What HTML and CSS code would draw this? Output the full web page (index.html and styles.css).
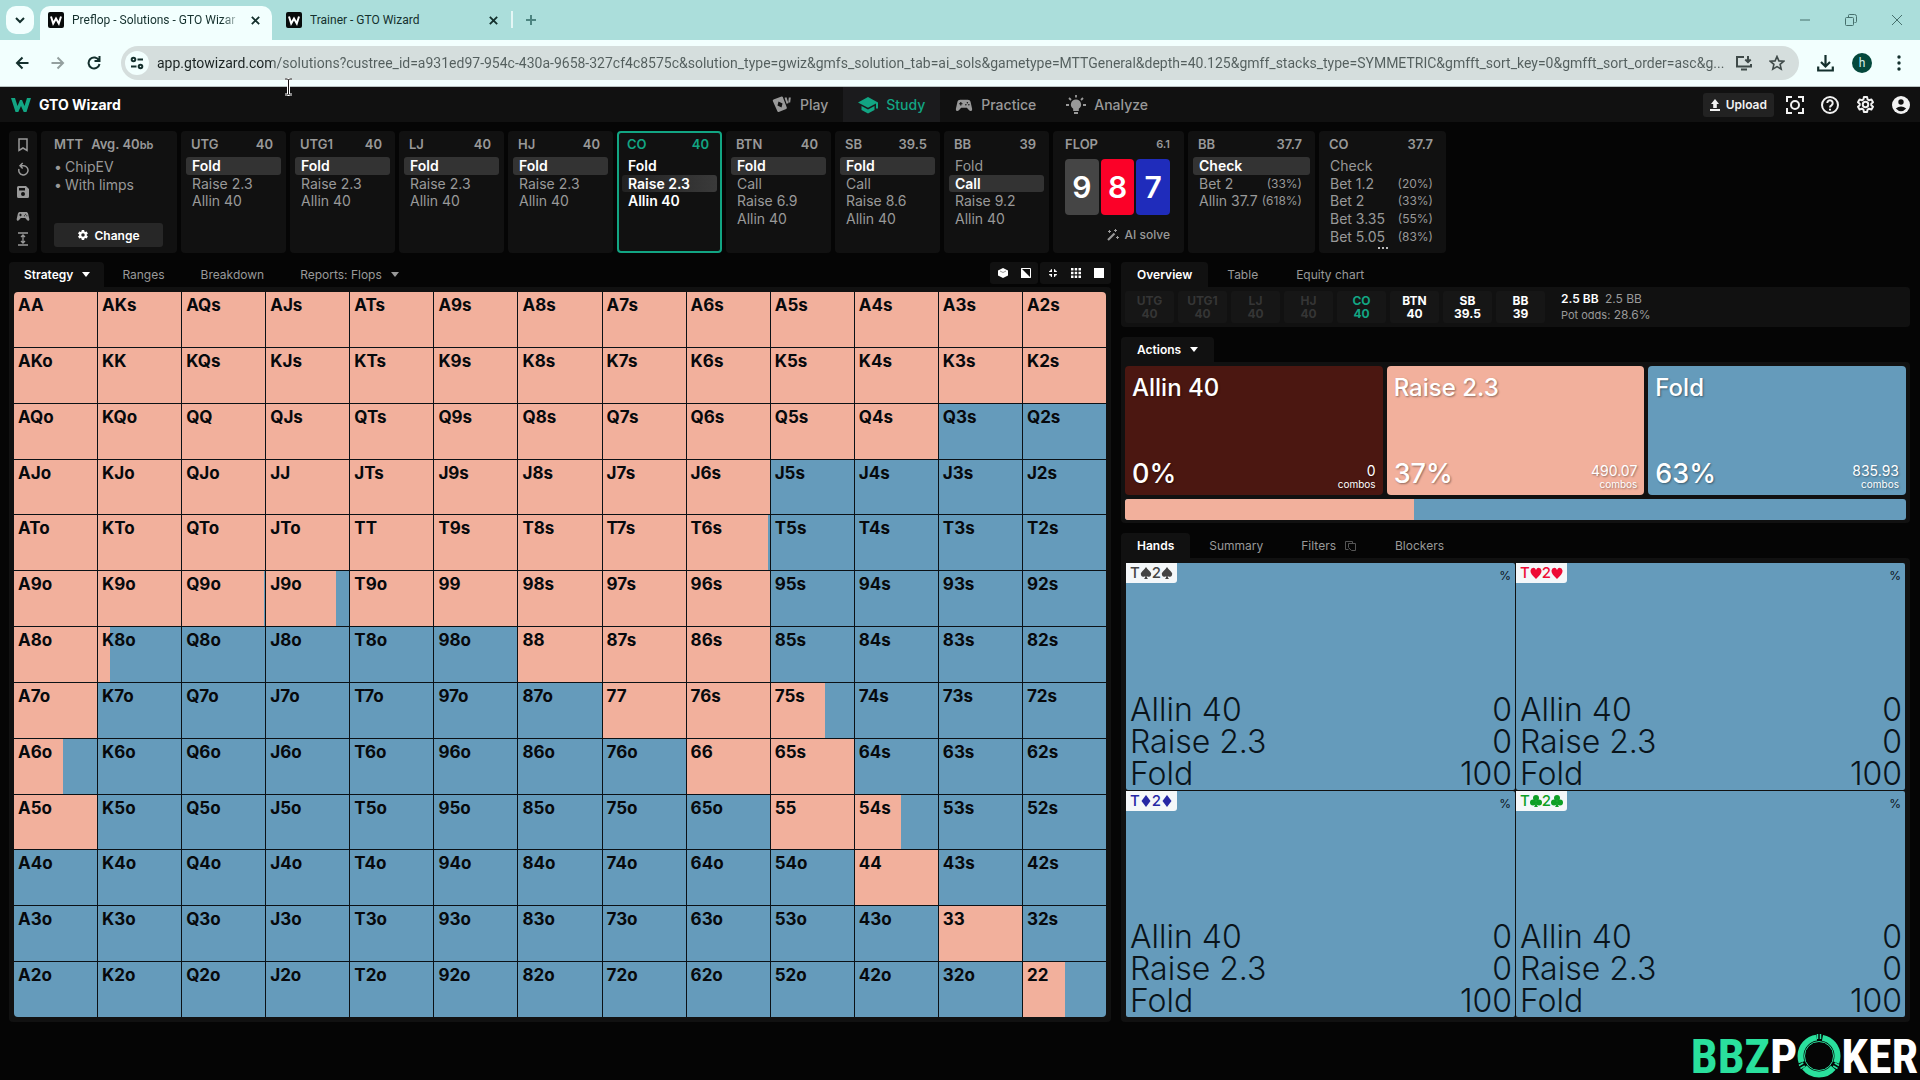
FILE: index.html
```html
<!DOCTYPE html>
<html lang="en">
<head>
<meta charset="utf-8">
<title>Preflop - Solutions - GTO Wizard</title>
<link rel="stylesheet" href="styles.css">
</head>
<body>
<svg class="defs" width="0" height="0" aria-hidden="true">
  <symbol id="gear" viewBox="0 0 24 24"><path d="M19.4 13c0-.3.1-.6.1-1s0-.7-.1-1l2.1-1.600c.2-.2.2-.4.1-.6l-2-3.500c-.1-.2-.4-.3-.6-.2l-2.500 1c-.5-.4-1.100-.7-1.700-1l-.4-2.600c0-.3-.2-.5-.5-.5h-4c-.3 0-.5.2-.5.4L9 5.100c-.6.2-1.200.6-1.700 1l-2.500-1c-.2-.1-.5 0-.6.200l-2 3.500c-.1.200-.1.500.1.600L4.500 11c0 .3-.1.700-.1 1s0 .7.100 1l-2.200 1.600c-.2.200-.2.400-.1.600l2 3.500c.1.200.4.300.6.200l2.500-1c.5.400 1.100.7 1.700 1l.4 2.600c0 .3.300.5.500.5h4c.3 0 .5-.2.500-.4l.4-2.700c.6-.2 1.200-.6 1.700-1l2.500 1c.2.100.5 0 .6-.2l2-3.500c.1-.2.100-.5-.1-.6zM12 15.500a3.500 3.500 0 1 1 0-7 3.500 3.500 0 0 1 0 7z"/></symbol>
  <symbol id="gear-line" viewBox="0 0 24 24"><path fill="none" stroke="currentColor" stroke-width="2.500" stroke-linejoin="round" d="M10 2.500h4l.6 3 2 1.200 2.900-1 2 3.500L19.300 11v2l2.200 1.900-2 3.400-2.900-1-2 1.200-.6 3h-4l-.6-3-2-1.200-2.900 1-2-3.400L4.700 13v-2L2.500 9.200l2-3.500 2.900 1 2-1.200z"/><circle cx="12" cy="12" r="3.500" fill="none" stroke="currentColor" stroke-width="2.500"/></symbol>
  <symbol id="pad" viewBox="0 0 24 24"><path fill-rule="evenodd" d="M7 5h10c2 0 3.300 1 3.800 3l2 9c.5 3-2.300 4-4 2l-3-3.500H8.200L5.200 19c-1.700 2-4.500 1-4-2l2-9C3.700 6 5 5 7 5zm0 3v1.500H5.500V11H7v1.500h1.500V11H10V9.500H8.500V8zm9.500 0a1 1 0 1 0 0 2 1 1 0 0 0 0-2zm-2 2.500a1 1 0 1 0 0 2 1 1 0 0 0 0-2zm4 0a1 1 0 1 0 0 2 1 1 0 0 0 0-2z"/></symbol>
  <symbol id="fav" viewBox="0 0 16 16"><rect width="16" height="16" rx="2" fill="#080b0b"/><path d="M3 4.500l2.200 7L8 6.500l2.800 5 2.200-7" fill="none" stroke="#fff" stroke-width="2"/></symbol>
  <symbol id="close" viewBox="0 0 12 12"><path d="M2 2l8 8M10 2l-8 8" fill="none" stroke="currentColor" stroke-width="2"/></symbol>
</svg>

<div class="browser">
  <div class="tabstrip">
    <button class="tab-search" aria-label="Search tabs"><svg width="10" height="8" viewBox="0 0 10 8"><path d="M1 2l4 4 4-4" fill="none" stroke="currentColor" stroke-width="2"/></svg></button>
    <div class="btab btab-on"><svg width="16" height="16"><use href="#fav"/></svg><span class="btab-title">Preflop - Solutions - GTO Wizar</span><button aria-label="Close tab"><svg width="11" height="11"><use href="#close"/></svg></button></div>
    <div class="btab"><svg width="16" height="16"><use href="#fav"/></svg><span class="btab-title">Trainer - GTO Wizard</span><button aria-label="Close tab"><svg width="11" height="11"><use href="#close"/></svg></button></div>
    <button class="new-tab" aria-label="New tab"><svg width="12" height="12" viewBox="0 0 12 12"><path d="M6 1v10M1 6h10" stroke="currentColor" stroke-width="2"/></svg></button>
    <div class="win">
      <button aria-label="Minimize"><svg width="12" height="12" viewBox="0 0 12 12"><path d="M1 6h10" stroke="currentColor"/></svg></button>
      <button aria-label="Restore"><svg width="12" height="12" viewBox="0 0 12 12"><path d="M3.500 3V1.500q0-1 1-1h5q2 0 2 2v5q0 1-1 1H9.500M.5 4.500q0-1 1-1h6q1 0 1 1v6q0 1-1 1h-6q-1 0-1-1z" fill="none" stroke="currentColor"/></svg></button>
      <button aria-label="Close"><svg width="12" height="12" viewBox="0 0 12 12"><path d="M1 1l10 10M11 1L1 11" stroke="currentColor"/></svg></button>
    </div>
  </div>
  <div class="toolbar">
    <button class="nav" aria-label="Back"><svg width="14" height="14" viewBox="0 0 14 14"><path d="M13.500 7H2M7.500 1.500L2 7l5.500 5.500" fill="none" stroke="currentColor" stroke-width="2"/></svg></button>
    <button class="nav dim" aria-label="Forward"><svg width="14" height="14" viewBox="0 0 14 14"><path d="M.5 7H12M6.500 1.500L12 7l-5.500 5.500" fill="none" stroke="currentColor" stroke-width="2"/></svg></button>
    <button class="nav" aria-label="Reload"><svg width="14" height="14" viewBox="0 0 14 14"><path d="M12 4.500A5.500 5.500 0 1 0 12.500 8M12.500 0v5h-5" fill="none" stroke="currentColor" stroke-width="2"/></svg></button>
    <div class="omnibox">
      <button class="site" aria-label="Site information"><svg width="14" height="14" viewBox="0 0 14 14" fill="none" stroke="currentColor" stroke-width="2"><circle cx="3.500" cy="3.500" r="1.800"/><path d="M7.500 3.500H13M1 10.500h5.500"/><circle cx="10.500" cy="10.500" r="1.800"/></svg></button>
      <input class="url" aria-label="Address" value="app.gtowizard.com/solutions?custree_id=a931ed97-954c-430a-9658-327cf4c8575c&amp;solution_type=gwiz&amp;gmfs_solution_tab=ai_sols&amp;gametype=MTTGeneral&amp;depth=40.125&amp;gmff_stacks_type=SYMMETRIC&amp;gmfft_sort_key=0&amp;gmfft_sort_order=asc&amp;g...">
      <button aria-label="Install app"><svg width="18" height="16" viewBox="0 0 18 16" fill="none" stroke="currentColor" stroke-width="2"><path d="M9 2H2v9.500h14V9M6 14.500h6M13 1v6M10.300 4.500L13 7.200l2.700-2.700"/></svg></button>
      <button aria-label="Bookmark"><svg width="16" height="16" viewBox="0 0 16 16"><path d="M8 1.500l1.900 4.400 4.800.4-3.600 3.100 1.100 4.700L8 11.600l-4.200 2.500 1.100-4.700L1.300 6.300l4.800-.4z" fill="none" stroke="currentColor" stroke-width="1.600"/></svg></button>
    </div>
    <button class="act" aria-label="Downloads"><svg width="17" height="17" viewBox="0 0 17 17"><path d="M8.500 0v11M4 7l4.500 4.500L13 7M1.200 11.500v4h14.600v-4" fill="none" stroke="currentColor" stroke-width="2.200"/></svg></button>
    <button class="avatar" aria-label="Profile">h</button>
    <button class="act" aria-label="Menu"><svg width="4" height="16" viewBox="0 0 4 16" fill="currentColor"><circle cx="2" cy="2" r="1.700"/><circle cx="2" cy="8" r="1.700"/><circle cx="2" cy="14" r="1.700"/></svg></button>
  </div>
</div>

<header class="top">
  <a class="brand" href="#"><svg width="20" height="16" viewBox="0 0 20 16"><path d="M0 1l4 0 2.500 8L9 3l2 0 2.500 6L16 1h4l-4.500 14h-2.800L10 9l-2.700 6H4.500z" fill="#12a583"/></svg>GTO Wizard</a>
  <nav class="mainnav">
    <a href="#"><svg width="20" height="20" viewBox="0 0 20 20" fill="currentColor"><path fill-rule="evenodd" d="M1.500 4.500l8-3q1-.3 1.300.6l4 10.500q.3 1-.6 1.300l-7.500 3q-1 .3-1.300-.6L.8 6Q.5 5 1.500 4.500zM6.500 6.500L5.500 10.500l4 2 1-4z"/><path d="M13.500 2.500l2 6M17.800 2.500l-.6 5" stroke="currentColor" stroke-width="2"/></svg>Play</a>
    <a href="#" class="on"><svg width="20" height="20" viewBox="0 0 20 20" fill="currentColor"><path d="M10 2L0 7.500l10 5.300 8-4.300v5h2v-6z"/><path d="M3.500 11v4l6.500 3.500 6.500-3.500v-4L10 14.500z"/></svg>Study</a>
    <a href="#"><svg width="18" height="20"><use href="#pad"/></svg>Practice</a>
    <a href="#"><svg width="20" height="20" viewBox="0 0 20 20" fill="currentColor"><path d="M10 4.500a5 5 0 0 0-2.800 9.200V16h5.600v-2.300A5 5 0 0 0 10 4.500zM8 17h4v2H8z"/><path d="M10 0v2.500M0 10h3M17 10h3M3 3l2 2M17 3l-2 2" stroke="currentColor" stroke-width="1.800"/></svg>Analyze</a>
  </nav>
  <div class="tools">
    <button class="upload"><svg width="10" height="12" viewBox="0 0 10 12" fill="currentColor"><path d="M5 0l4 5H6.800v4H3.200V5H1zM0 10h10v2H0z"/></svg>Upload</button>
    <button aria-label="Capture"><svg width="18" height="18" viewBox="0 0 18 18" fill="none" stroke="currentColor" stroke-width="2"><path d="M1 6V1h5M12 1h5v5M17 12v5h-5M6 17H1v-5"/><circle cx="9" cy="9" r="4"/></svg></button>
    <button aria-label="Help"><svg width="18" height="18" viewBox="0 0 18 18" fill="none" stroke="currentColor" stroke-width="2"><circle cx="9" cy="9" r="8"/><path d="M6.300 7a2.700 2.700 0 1 1 4.200 2.300Q9 10.200 9 11.500M9 12.700v1.800"/></svg></button>
    <button aria-label="Settings"><svg width="19" height="19"><use href="#gear-line"/></svg></button>
    <button aria-label="Account"><svg width="18" height="18" viewBox="0 0 18 18"><circle cx="9" cy="9" r="9" fill="currentColor"/><circle cx="9" cy="6" r="2.700" fill="#111"/><path d="M3.800 12.500Q9 8.500 14.200 12.500 9 18 3.800 12.500z" fill="#111"/></svg></button>
  </div>
</header>

<section class="line" aria-label="Action line">
  <div class="card side">
    <button aria-label="Bookmark"><svg width="12" height="14" viewBox="0 0 12 14"><path d="M2 1h8v11.500L6 10l-4 2.500z" fill="none" stroke="currentColor" stroke-width="1.500"/></svg></button>
    <button aria-label="Reset"><svg width="14" height="14" viewBox="0 0 14 14"><path d="M4.500 3.800H8A4.600 4.600 0 1 1 3 7M6.700 1L4 3.800l2.700 2.800" fill="none" stroke="currentColor" stroke-width="1.500"/></svg></button>
    <button aria-label="Save"><svg width="12" height="12" viewBox="0 0 12 12"><path fill="currentColor" fill-rule="evenodd" d="M1.500 0H9l3 3v7.500q0 1.500-1.500 1.500h-9Q0 12 0 10.500v-9Q0 0 1.500 0zM2 2v2.500h6V2zM6 6a2 2 0 1 0 0 4 2 2 0 0 0 0-4z"/></svg></button>
    <button aria-label="Train"><svg width="14" height="14"><use href="#pad"/></svg></button>
    <button aria-label="Fit height"><svg width="12" height="14" viewBox="0 0 12 14"><path d="M1 1h10M1 13h10M6 3v8M4 5l2-2 2 2M4 9l2 2 2-2" fill="none" stroke="currentColor" stroke-width="1.300"/></svg></button>
  </div>
  <div class="card setup">
    <div class="card-head"><span>MTT</span><span class="avg">Avg. 40<small>bb</small></span></div>
    <ul><li>ChipEV</li><li>With limps</li></ul>
    <button class="change"><svg width="12" height="12"><use href="#gear"/></svg>Change</button>
  </div>
  <div class="card"><div class="card-head"><span>UTG</span><span>40</span></div><div class="acts"><button class="sel">Fold</button><button>Raise 2.3</button><button>Allin 40</button></div></div>
  <div class="card"><div class="card-head"><span>UTG1</span><span>40</span></div><div class="acts"><button class="sel">Fold</button><button>Raise 2.3</button><button>Allin 40</button></div></div>
  <div class="card"><div class="card-head"><span>LJ</span><span>40</span></div><div class="acts"><button class="sel">Fold</button><button>Raise 2.3</button><button>Allin 40</button></div></div>
  <div class="card"><div class="card-head"><span>HJ</span><span>40</span></div><div class="acts"><button class="sel">Fold</button><button>Raise 2.3</button><button>Allin 40</button></div></div>
  <div class="card current"><div class="card-head"><span>CO</span><span>40</span></div><div class="acts"><button>Fold</button><button class="sel">Raise 2.3</button><button>Allin 40</button></div></div>
  <div class="card"><div class="card-head"><span>BTN</span><span>40</span></div><div class="acts"><button class="sel">Fold</button><button>Call</button><button>Raise 6.9</button><button>Allin 40</button></div></div>
  <div class="card"><div class="card-head"><span>SB</span><span>39.5</span></div><div class="acts"><button class="sel">Fold</button><button>Call</button><button>Raise 8.6</button><button>Allin 40</button></div></div>
  <div class="card"><div class="card-head"><span>BB</span><span>39</span></div><div class="acts"><button>Fold</button><button class="sel">Call</button><button>Raise 9.2</button><button>Allin 40</button></div></div>
  <div class="card flop">
    <div class="card-head"><span>FLOP</span><small>6.1</small></div>
    <div class="board"><span class="b-s">9</span><span class="b-h">8</span><span class="b-d">7</span></div>
    <button class="solve"><svg width="12" height="12" viewBox="0 0 12 12" fill="none" stroke="currentColor"><path d="M1 11l6.500-6.500" stroke-width="2.200"/><path d="M8.500 0v3M7 1.500h3M2.500 1v3M1 2.500h3M10.500 7v3M9 8.500h3"/></svg>AI solve</button>
  </div>
  <div class="card wide"><div class="card-head"><span>BB</span><span>37.7</span></div><div class="acts"><button class="sel">Check</button><button>Bet 2<small>(33%)</small></button><button>Allin 37.7<small>(618%)</small></button></div></div>
  <div class="card wide more"><div class="card-head"><span>CO</span><span>37.7</span></div><div class="acts"><button>Check</button><button>Bet 1.2<small>(20%)</small></button><button>Bet 2<small>(33%)</small></button><button>Bet 3.35<small>(55%)</small></button><button>Bet 5.05<small>(83%)</small></button></div></div>
</section>

<main class="work">
  <section class="left">
    <div class="tabs">
      <button class="on">Strategy<i class="caret"></i></button><button>Ranges</button><button>Breakdown</button><button>Reports: Flops<i class="caret"></i></button>
      <div class="views">
        <div>
          <button aria-label="3D"><svg width="12" height="12" viewBox="0 0 12 12"><path d="M6 1l5 2.500v5L6 11 1 8.500v-5z" fill="currentColor"/><path d="M3 4l3 1.500L9 4" fill="none" stroke="#999"/></svg></button>
          <button aria-label="Contrast"><svg width="10" height="10" viewBox="0 0 10 10"><path d="M.5.500h9v9h-9z" fill="none" stroke="currentColor"/><path d="M0 0v10h10z" fill="currentColor"/></svg></button>
        </div>
        <div>
          <button aria-label="Suits"><svg width="10" height="10" viewBox="0 0 10 10" fill="currentColor"><path d="M4 1v3H1q0-1.500 1.500-1.500Q2.500 1 4 1zM6 1q1.500 0 1.500 1.500Q9 2.500 9 4H6zM9 6q0 1.500-1.500 1.500Q7.500 9 6 9V6zM4 9Q2.500 9 2.500 7.500 1 7.500 1 6h3z"/></svg></button>
          <button aria-label="Small grid"><svg width="10" height="10" viewBox="0 0 10 10" fill="currentColor"><path d="M0 0h2.500v2.500H0zM3.700 0h2.500v2.500H3.700zM7.500 0H10v2.500H7.500zM0 3.700h2.500v2.500H0zM3.700 3.700h2.500v2.500H3.700zM7.500 3.700H10v2.500H7.500zM0 7.500h2.500V10H0zM3.700 7.500h2.500V10H3.700zM7.500 7.500H10V10H7.500z"/></svg></button>
          <button aria-label="Full cell"><svg width="10" height="10"><rect width="10" height="10" fill="currentColor"/></svg></button>
        </div>
      </div>
    </div>
    <div class="panel matrix-panel"><div class="matrix" id="matrix"></div></div>
  </section>

  <section class="right">
    <div class="tabs"><button class="on">Overview</button><button>Table</button><button>Equity chart</button></div>
    <div class="panel seats">
      <div class="seat">UTG<br>40</div><div class="seat">UTG1<br>40</div><div class="seat">LJ<br>40</div><div class="seat">HJ<br>40</div>
      <div class="seat hero">CO<br>40</div><div class="seat live">BTN<br>40</div><div class="seat live">SB<br>39.5</div><div class="seat live">BB<br>39</div>
      <div class="pot"><div><b>2.5 BB</b> 2.5 BB</div><div><small>Pot odds:</small> 28.6%</div></div>
    </div>

    <div class="tabs"><button class="on">Actions<i class="caret"></i></button></div>
    <div class="panel actions">
      <div class="boxes">
        <button class="box allin"><span class="name">Allin 40</span><span class="foot"><span class="pct">0%</span><span class="combos">0<small>combos</small></span></span></button>
        <button class="box raise"><span class="name">Raise 2.3</span><span class="foot"><span class="pct">37%</span><span class="combos">490.07<small>combos</small></span></span></button>
        <button class="box fold"><span class="name">Fold</span><span class="foot"><span class="pct">63%</span><span class="combos">835.93<small>combos</small></span></span></button>
      </div>
      <div class="bar"><div class="bar-raise" style="width:37%"></div></div>
    </div>

    <div class="tabs"><button class="on">Hands</button><button>Summary</button><button>Filters<svg width="12" height="12" viewBox="0 0 12 12" fill="none" stroke="#555"><path d="M3.500 9.500h-3v-8h7v2M3.500 3.500h7v7h-4l-3-3z"/></svg></button><button>Blockers</button></div>
    <div class="panel hands">
      <div class="hand"><div class="hand-top"><span class="combo s">T<svg><use href="#sp"/></svg>2<svg><use href="#sp"/></svg></span><span>%</span></div><dl><dt>Allin 40</dt><dd>0</dd><dt>Raise 2.3</dt><dd>0</dd><dt>Fold</dt><dd>100</dd></dl></div>
      <div class="hand"><div class="hand-top"><span class="combo h">T<svg><use href="#he"/></svg>2<svg><use href="#he"/></svg></span><span>%</span></div><dl><dt>Allin 40</dt><dd>0</dd><dt>Raise 2.3</dt><dd>0</dd><dt>Fold</dt><dd>100</dd></dl></div>
      <div class="hand"><div class="hand-top"><span class="combo d">T<svg><use href="#di"/></svg>2<svg><use href="#di"/></svg></span><span>%</span></div><dl><dt>Allin 40</dt><dd>0</dd><dt>Raise 2.3</dt><dd>0</dd><dt>Fold</dt><dd>100</dd></dl></div>
      <div class="hand"><div class="hand-top"><span class="combo c">T<svg><use href="#cl"/></svg>2<svg><use href="#cl"/></svg></span><span>%</span></div><dl><dt>Allin 40</dt><dd>0</dd><dt>Raise 2.3</dt><dd>0</dd><dt>Fold</dt><dd>100</dd></dl></div>
    </div>
  </section>
</main>

<svg class="defs" width="0" height="0" aria-hidden="true">
  <symbol id="sp" viewBox="0 0 12 14"><path d="M6 1q1.500 2.500 3.700 4.200Q12 7 11 9.300 9.500 12 6.700 10q0 2 1.300 3H4q1.300-1 1.300-3Q2.500 12 1 9.300 0 7 2.300 5.200 4.500 3.500 6 1z"/></symbol>
  <symbol id="he" viewBox="0 0 12 14"><path d="M6 13Q0 7.500.5 4.500 1 1.800 3.300 1.800 5.200 1.800 6 4q.8-2.200 2.700-2.200 2.300 0 2.800 2.700Q12 7.500 6 13z"/></symbol>
  <symbol id="di" viewBox="0 0 12 14"><path d="M6 1l4.500 6L6 13 1.500 7z"/></symbol>
  <symbol id="cl" viewBox="0 0 12 14"><circle cx="6" cy="4" r="3"/><circle cx="3" cy="8.500" r="3"/><circle cx="9" cy="8.500" r="3"/><path d="M5.300 7h1.400q-.2 4.500 1.300 6H4q1.500-1.500 1.300-6z"/></symbol>
</svg>

<footer class="sponsor"><span class="bbz">BBZ</span><span>P</span><svg width="44" height="44" viewBox="0 0 44 44" fill="none"><circle cx="22" cy="22" r="18.500" stroke="#2ae09d" stroke-width="6" stroke-dasharray="32.750 6" stroke-dashoffset="-12.700"/><circle cx="22" cy="22" r="14.500" stroke="#2ae09d" stroke-width="1"/><path d="M20.500 0v5M23.500 0v5M2 31.500l4.300-2.500M3.500 34.500l4.300-2.500M42 31.500L37.700 29M40.500 34.500L36.200 32" stroke="#2ae09d" stroke-width="1.500"/></svg><span>KER</span></footer>

<svg class="cursor" width="9" height="18" viewBox="0 0 9 18" aria-hidden="true"><path d="M1 1h2.500l1 1 1-1H8M4.500 2v14M1 17h2.500l1-1 1 1H8" fill="none" stroke="#fff" stroke-width="3"/><path d="M1 1h2.500l1 1 1-1H8M4.500 2v14M1 17h2.500l1-1 1 1H8" fill="none" stroke="#111"/></svg>
<script src="app.js"></script>
</body>
</html>
```

FILE: styles.css
```css
* { box-sizing: border-box; }
:root {
  --raise: #f2b09c;
  --fold: #659bbb;
  --allin: #4b1711;
  --panel: #111111;
  --green: #12a583;
}
body {
  margin: 0;
  min-height: 100vh;
  display: flex;
  flex-direction: column;
  background: #050505;
  color: #999;
  font-family: Inter, "Liberation Sans", sans-serif;
  font-size: 14px;
}
button, input { font: inherit; color: inherit; border: 0; margin: 0; padding: 0; background: none; }
button { display: flex; align-items: center; justify-content: center; }
a { color: inherit; text-decoration: none; }
svg { display: block; flex: none; }
.defs { position: absolute; }

/* browser frame */
.browser { font-family: Roboto, "Noto Sans", sans-serif; color: #14302d; border-bottom: 1px solid #b9c4c3; }
.tabstrip { height: 40px; background: #abdedb; display: flex; align-items: flex-end; padding-left: 6px; }
.tab-search { width: 28px; height: 28px; border-radius: 10px; background: #f2fffe; margin: 0 6px 6px 0; }
.btab { width: 232px; height: 34px; display: flex; align-items: center; gap: 8px; padding: 0 11px 6px 8px; font-size: 12px; border-radius: 10px 10px 0 0; }
.btab + .btab { margin-left: 6px; }
.btab-on { background: #f2fffe; }
.btab-title { flex: 1; overflow: hidden; white-space: nowrap; }
.btab-on .btab-title { mask-image: linear-gradient(to right, #000 88%, transparent); }
.new-tab { border-left: 2px solid #e4f6f5; height: 17px; padding-left: 12px; margin: 0 0 12px 1px; color: #4c8480; }
.win { margin-left: auto; height: 40px; display: flex; gap: 34px; padding-right: 17px; color: #47706d; }
.toolbar { height: 46px; background: #f2fffe; display: flex; align-items: center; padding: 0 13px 0 15px; }
.nav { width: 14px; height: 28px; margin-right: 22px; }
.nav.dim { color: #94a09f; }
.omnibox { flex: 1; height: 34px; border-radius: 17px; background: #d5dedd; display: flex; align-items: center; gap: 16px; padding: 0 14px 0 4px; margin: 0 18px 0 -2px; color: #3f4a49; }
.site { width: 24px; height: 24px; border-radius: 12px; background: #f2fffe; color: #14302d; }
.url { flex: 1; min-width: 0; height: 30px; margin: 0 -9px 0 -8px; font-size: 14px; color: transparent; background: linear-gradient(to right, #1b2322 115px, #535e5d 115px); background-clip: text; }
.act { width: 17px; height: 28px; }
.avatar { width: 20px; height: 20px; border-radius: 10px; background: #04483c; color: #d9efeb; font-size: 12px; margin: 0 18px; }

/* application header */
.top { height: 35px; background: var(--panel); display: grid; grid-template-columns: 1fr auto 1fr; align-items: stretch; }
.brand { display: flex; align-items: center; gap: 8px; padding-left: 11px; color: #fff; font-weight: 700; }
.mainnav { display: flex; }
.mainnav a { display: flex; align-items: center; gap: 8px; padding: 0 15px; font-weight: 500; }
.mainnav svg { fill: currentColor; }
.mainnav .on { color: var(--green); background: #1b1b1d; }
.tools { display: flex; align-items: center; justify-content: flex-end; gap: 17px; padding-right: 10px; color: #f2f2f2; }
.upload { height: 24px; padding: 0 7px; gap: 6px; margin-right: -5px; border-radius: 3px; background: #222; font-size: 12px; font-weight: 600; }

/* action line */
.line { display: flex; gap: 4px; padding: 9px; }
.card { width: 105px; height: 122px; padding: 4px 5px; border-radius: 4px; background: var(--panel); }
.card-head { display: flex; justify-content: space-between; line-height: 18px; margin-bottom: 4px; padding: 0 8px 0 5px; font-size: 13px; font-weight: 600; }
.card-head small { font-size: 11px; }
.acts { height: 88px; display: grid; grid-template-rows: repeat(5, 1fr); }
.acts button { justify-content: space-between; padding: 0 8px 0 6px; border-radius: 3px; font-weight: 400; }
.acts small { font-size: 12px; }
.acts .sel { background: #333; color: #fff; font-weight: 600; }
.current { border: 2px solid var(--green); padding: 2px 3px; }
.current .card-head { color: var(--green); }
.current .acts button { color: #fff; font-weight: 600; }
.current .acts .sel { background: linear-gradient(to right, #222, #3a3a3a); }
.wide { width: 127px; }
.side { width: 28px; padding: 6px 0; display: flex; flex-direction: column; align-items: center; justify-content: space-between; }
.side button { height: 16px; }
.side svg, .setup svg { fill: currentColor; }
.setup { width: 136px; padding: 4px 14px 6px 13px; display: flex; flex-direction: column; }
.setup .card-head { justify-content: flex-start; gap: 8px; padding: 0; }
.setup ul { list-style: none; margin: 0; padding: 0; line-height: 18px; }
.setup li::before { content: "•"; display: inline-block; width: 11px; }
.change { height: 24px; margin-top: auto; gap: 5px; border-radius: 3px; background: #272727; color: #fff; font-size: 12px; font-weight: 600; }
.flop { width: 131px; padding: 4px 14px 4px 12px; }
.flop .card-head { padding: 0; margin-bottom: 6px; }
.board { display: grid; grid-template-columns: repeat(3, 1fr); gap: 2px; height: 56px; }
.board span { display: flex; align-items: center; justify-content: center; border-radius: 4px; color: #fff; font-size: 30px; font-weight: 600; }
.b-s { background: #454545; }
.b-h { background: #fb0128; }
.b-d { background: #1f2cbb; }
.solve { margin: 12px 0 0 auto; gap: 5px; font-size: 12px; font-weight: 500; line-height: 16px; }
.more { position: relative; }
.more::after { content: ""; position: absolute; left: 59px; bottom: 4px; width: 2px; height: 2px; background: #bbb; box-shadow: 4px 0 #bbb, 8px 0 #bbb; }

/* work area */
.work { flex: 1; display: grid; grid-template-columns: 1102fr 789fr; gap: 10px; padding: 0 10px 0 9px; }
.left, .right { display: flex; flex-direction: column; min-width: 0; }
.tabs { display: flex; height: 25px; }
.tabs > button { padding: 0 19px; font-size: 12px; gap: 9px; border-radius: 4px 4px 0 0; }
.left .tabs > button { padding: 0 18px; }
.tabs > .on, .left .tabs > .on { background: var(--panel); color: #fff; font-weight: 600; padding: 0 16px; }
.left .tabs > .on { padding: 0 14px 0 15px; }
.caret { border: 4px solid transparent; border-top: 5px solid currentColor; border-bottom: 0; }
.views { margin-left: auto; display: flex; gap: 2px; height: 22px; color: #fff; }
.views div { display: flex; background: var(--panel); border-radius: 3px; padding: 0 1px; }
.views button { width: 23px; }
.panel { background: var(--panel); border-radius: 0 4px 4px 4px; }
.matrix-panel { flex: 1; display: flex; padding: 5px; }
.matrix { flex: 1; display: grid; grid-template: repeat(13, 1fr) / repeat(13, 1fr); gap: 1px; background: #0b1116; border-radius: 4px; overflow: hidden; }
.cell { align-items: flex-start; justify-content: flex-start; min-width: 0; padding: 3px 4px; color: #07090c; font-size: 17px; font-weight: 700; line-height: 20px; background: linear-gradient(to right, var(--raise) var(--freq), var(--fold) var(--freq)); }

.seats { display: flex; gap: 4px; height: 40px; margin-bottom: 10px; padding: 4px; }
.seat { width: 49px; border-radius: 3px; background: #161616; color: #353535; font-size: 12px; font-weight: 700; line-height: 13px; padding-top: 3px; text-align: center; }
.seat.hero { color: var(--green); }
.seat.live { color: #fff; }
.pot { margin-left: 12px; font-size: 12px; line-height: 16px; }
.pot b { color: #fff; font-weight: 600; margin-right: 3px; }
.pot small { font-size: 11px; }

.actions { padding: 4px 4px 3px; margin-bottom: 10px; }
.boxes { display: grid; grid-template-columns: repeat(3, 1fr); gap: 4px; margin-bottom: 4px; }
.box { height: 129px; padding: 6px 7px; border-radius: 4px; color: #fff; flex-direction: column; align-items: stretch; justify-content: space-between; text-align: left; text-shadow: 1px 1px 2px rgba(0, 0, 0, .4); }
.allin { background: var(--allin); }
.raise { background: var(--raise); }
.fold { background: var(--fold); }
.name { font-size: 24px; line-height: 32px; font-weight: 500; }
.foot { display: flex; justify-content: space-between; align-items: flex-end; }
.pct { font-size: 27px; line-height: 30px; font-weight: 500; }
.combos { font-size: 14px; line-height: 16px; text-align: right; }
.combos small { display: block; font-size: 10px; line-height: 10px; }
.bar { height: 21px; border-radius: 3px; overflow: hidden; background: var(--fold); }
.bar-raise { height: 100%; background: var(--raise); }

.hands { flex: 1; display: grid; grid-template: 1fr 1fr / 1fr 1fr; gap: 1px; padding: 5px; }
.hand { display: flex; flex-direction: column; justify-content: space-between; background: var(--fold); color: #0a141b; border-radius: 2px; }
.hand-top { display: flex; justify-content: space-between; line-height: 26px; font-size: 12px; padding-right: 4px; }
.combo { display: flex; align-items: center; height: 20px; padding: 0 4px; background: #f4f7f9; border-radius: 0 0 3px 0; font-size: 15px; font-weight: 500; fill: currentColor; }
.combo svg { width: 12px; height: 14px; }
.s { color: #444; }
.h { color: #ee0a35; }
.d { color: #2527a5; }
.c { color: #0d9f25; }
dl { display: grid; grid-template-columns: auto auto; margin: 0; padding: 0 3px 0 4px; font-size: 32px; line-height: 32px; font-weight: 300; }
dd { margin: 0; text-align: right; }

.sponsor { height: 58px; display: flex; align-items: center; justify-content: flex-end; padding: 10px 2px 0 0; color: #fff; font: 700 48px "Roboto Condensed", Roboto, sans-serif; }
.bbz { color: #2ae09d; }
.cursor { position: absolute; left: 284px; top: 78px; }
```

FILE: app.js
```js
// Raise frequency (%) per starting hand; rows and columns run from A down to 2.
const ranks = 'AKQJT98765432';
const full = (n, ...rest) => [...Array(n).fill(100), ...rest];
const none = (n, ...rest) => [...Array(n).fill(0), ...rest];
const raise = [
  full(13),
  full(13),
  full(11),
  full(9),
  full(8, 97),
  [100, 100, 99, 84, 100, 100, 100, 100, 100],
  [100, 14, 0, 0, 0, 0, 100, 100, 100],
  [100, 0, 0, 0, 0, 0, 0, 100, 100, 65],
  [59, 0, 0, 0, 0, 0, 0, 0, 100, 100],
  [100, 0, 0, 0, 0, 0, 0, 0, 0, 100, 56],
  none(10, 100),
  none(11, 100),
  none(12, 50)
];
const matrix = document.getElementById('matrix');
[...ranks].forEach((r, i) => {
  [...ranks].forEach((c, j) => {
    const cell = document.createElement('button');
    cell.className = 'cell';
    cell.textContent = i === j ? r + c : i < j ? r + c + 's' : c + r + 'o';
    cell.style.setProperty('--freq', (raise[i][j] || 0) + '%');
    matrix.append(cell);
  });
});
```
